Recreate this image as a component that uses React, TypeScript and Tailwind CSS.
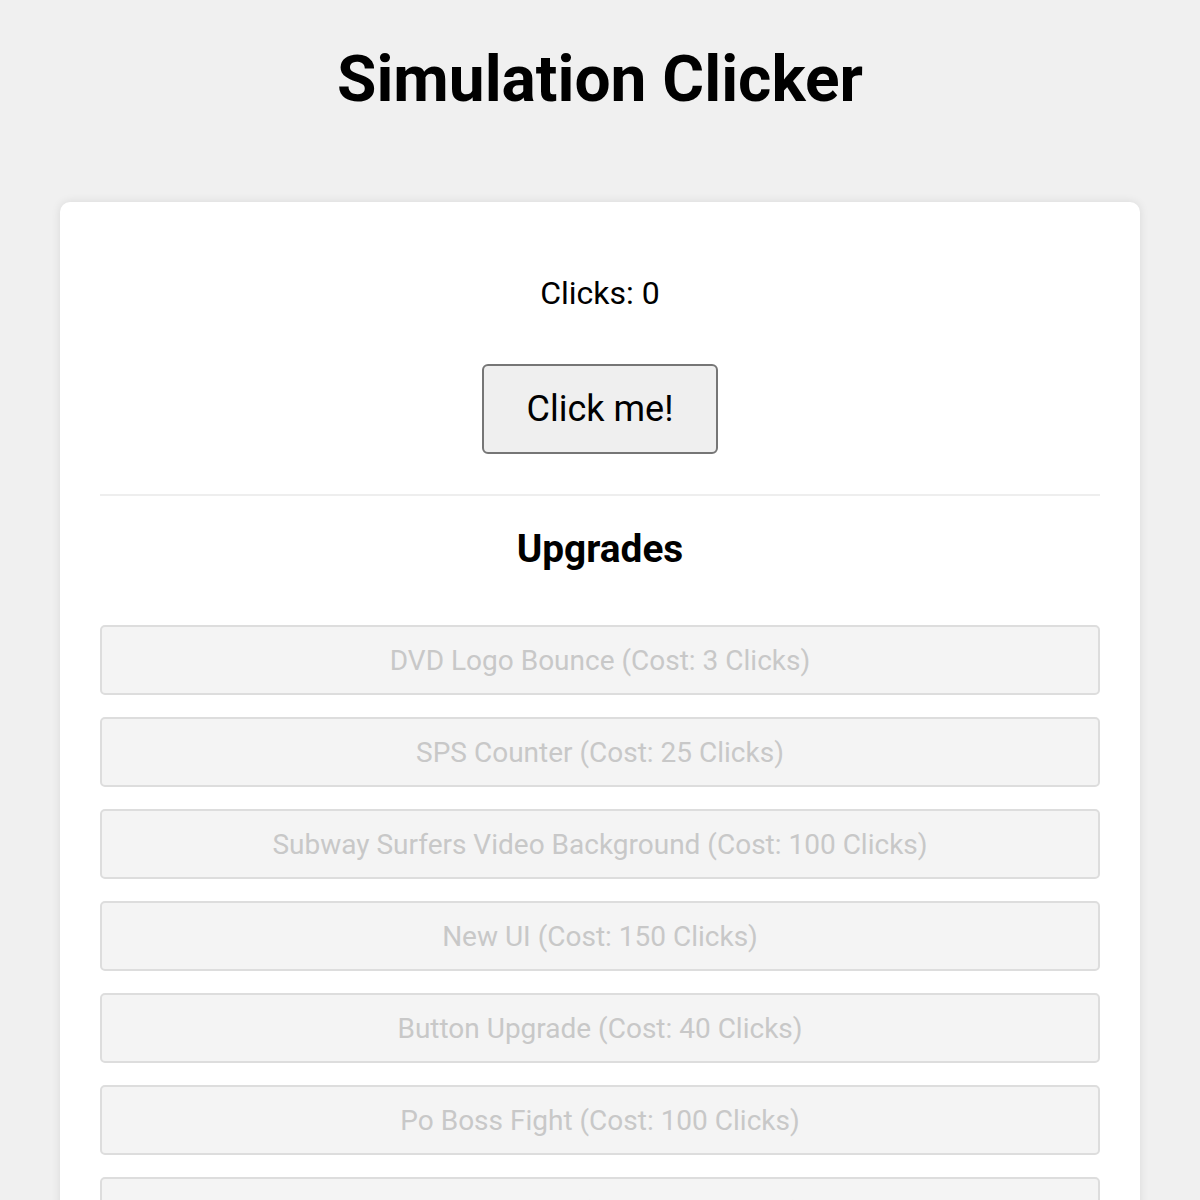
import React, { useState } from "react";

const upgrades = [
  { name: "DVD Logo Bounce", cost: 3 },
  { name: "SPS Counter", cost: 25 },
  { name: "Subway Surfers Video Background", cost: 100 },
  { name: "New UI", cost: 150 },
  { name: "Button Upgrade", cost: 40 },
  { name: "Po Boss Fight", cost: 100 },
  { name: "Endless Mode", cost: 500 },
];

export default function App() {
  const [clicks, setClicks] = useState(0);

  return (
    <div
      className="min-h-[1200px] bg-[#f0f0f0] px-[60px] pt-[42px] text-black"
      style={{ fontFamily: "Roboto, 'Liberation Sans', sans-serif" }}
    >
      {/* title */}
      <h1 className="text-center text-[64px] font-bold leading-[75px]">
        Simulation Clicker
      </h1>

      {/* game card */}
      <div className="mt-[85px] rounded-[10px] bg-white px-[40px] pt-[72px] pb-[40px] shadow-[0_0_10px_rgba(0,0,0,0.1)]">
        <p className="text-center text-[32px] leading-[38px]">Clicks: {clicks}</p>
        <div className="mt-[52px] flex justify-center">
          <button
            onClick={() => setClicks(clicks + 1)}
            className="rounded-[6px] border-2 border-[#767676] bg-[#efefef] px-[43px] pt-[23px] pb-[22px] text-[36px] leading-[41px]"
          >
            Click me!
          </button>
        </div>
        <div className="mt-[40px] h-[2px] w-full bg-[#eeeeee]" />
        <h3 className="mt-[31px] text-center text-[38.8px] font-bold leading-[44px]">
          Upgrades
        </h3>
        <div className="mt-[54px] flex flex-col gap-[22px]">
          {upgrades.map((item) => (
            <button
              key={item.name}
              disabled={clicks < item.cost}
              className="flex h-[70px] w-full items-center justify-center rounded-[5px] border-2 border-[#dddddd] bg-[#f4f4f4] pt-[2px] text-[28px] text-[#c8c8c8]"
            >
              {item.name} (Cost: {item.cost} Clicks)
            </button>
          ))}
        </div>
      </div>
    </div>
  );
}
